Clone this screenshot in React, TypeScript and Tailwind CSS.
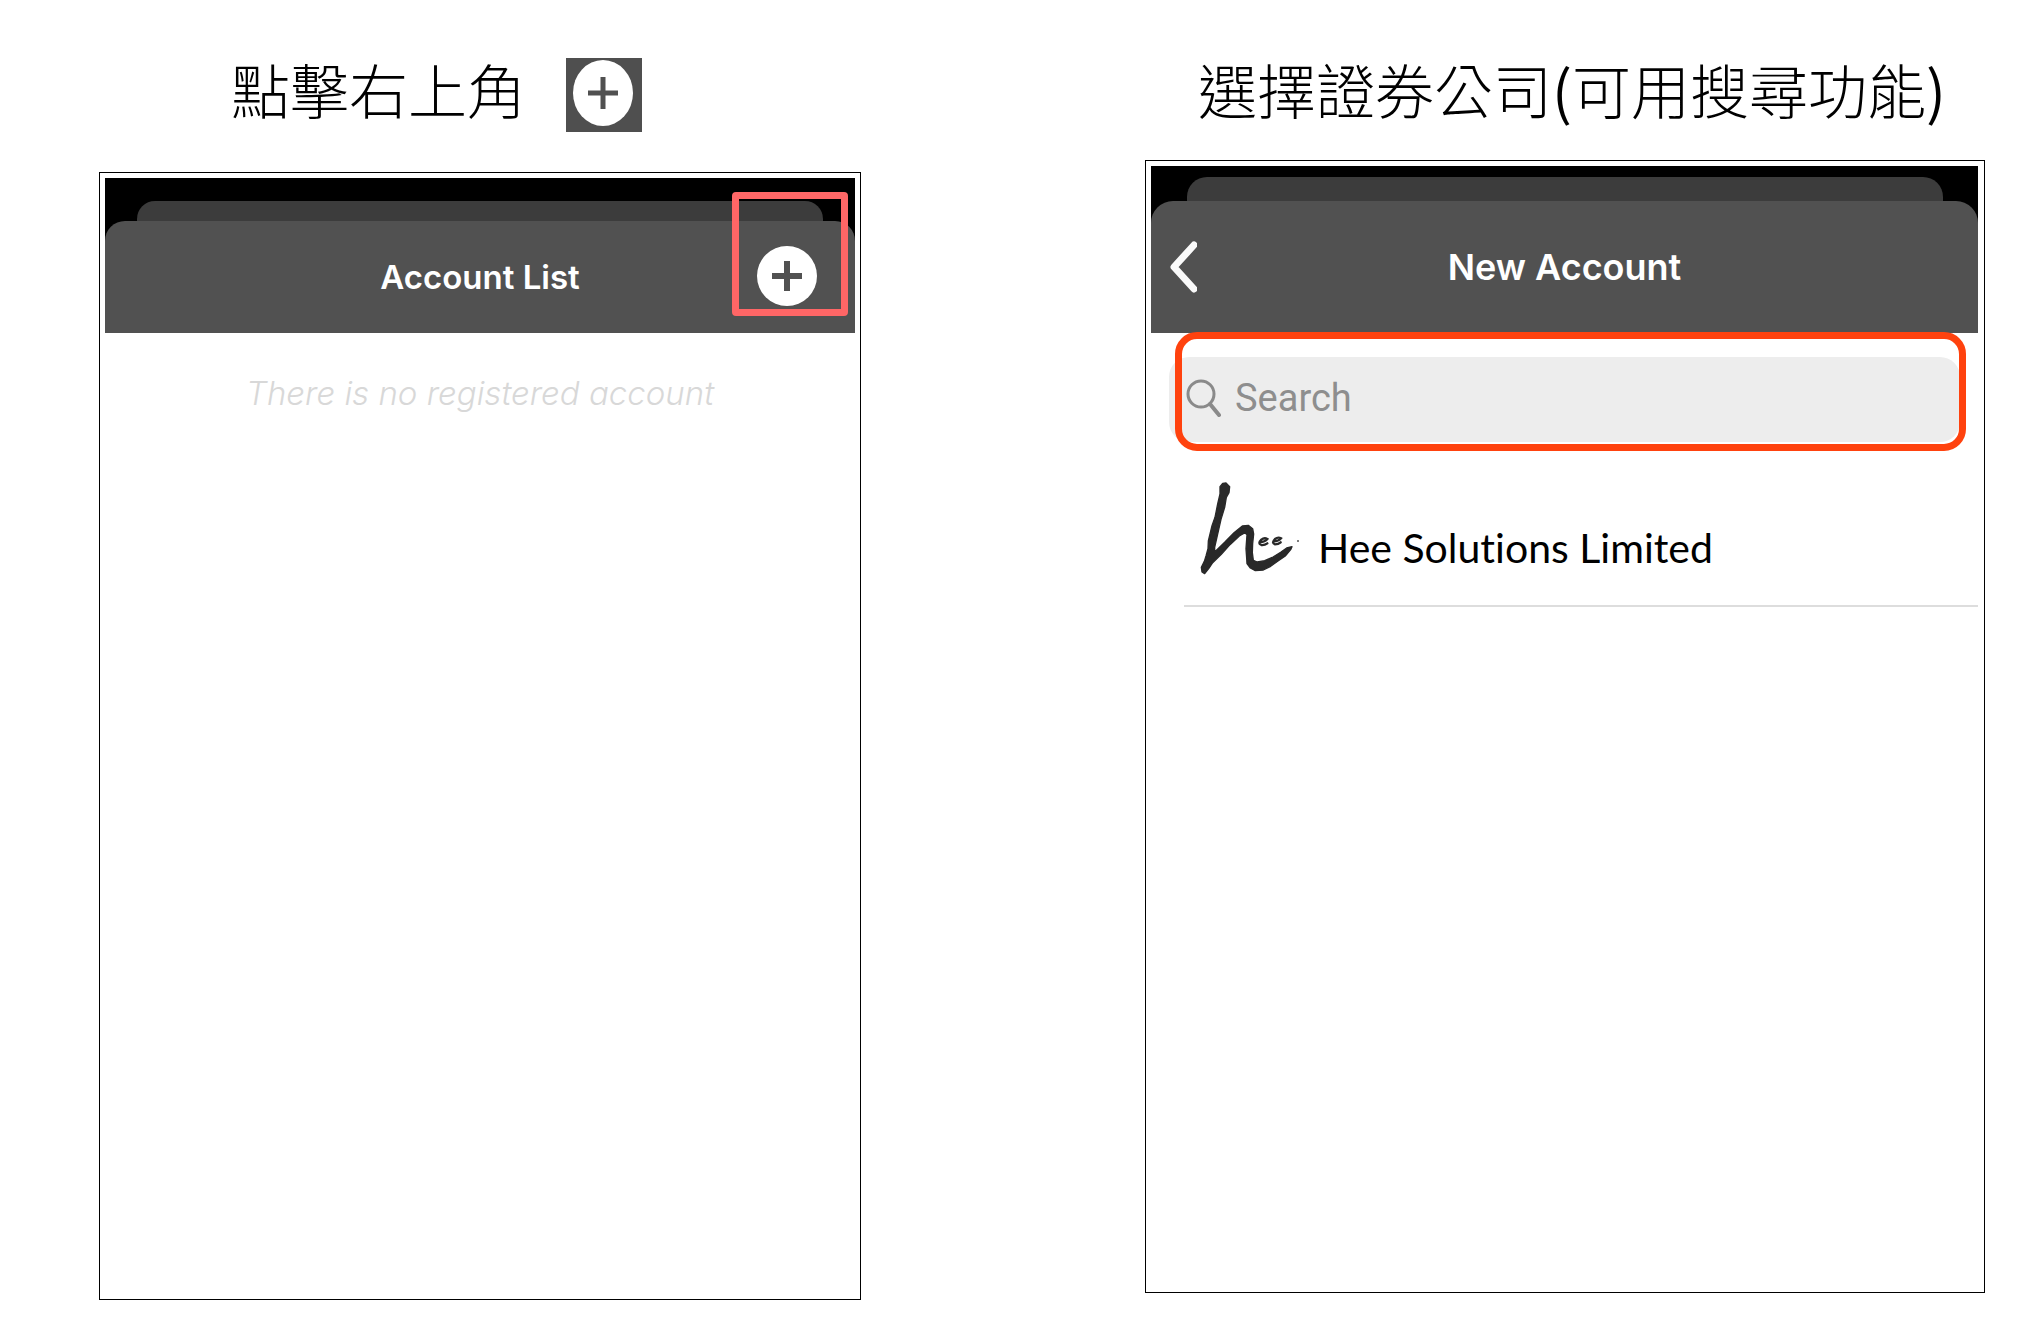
import type { ReactNode } from "react";

type PhoneHeaderProps = {
  children: ReactNode;
};

function PlusIcon({ className }: { className: string }) {
  return (
    <svg aria-hidden="true" className={className} viewBox="0 0 60 60">
      <circle cx="30" cy="30" fill="#ffffff" r="30" />
      <path d="M30 15v30M15 30h30" stroke="#515151" strokeWidth="6" />
    </svg>
  );
}

function PlusTile() {
  return (
    <svg aria-label="+" className="h-[74px] w-[76px] bg-[#4f4f4f]" role="img" viewBox="0 0 76 74">
      <ellipse cx="37" cy="35" fill="#ffffff" rx="30" ry="33" />
      <path d="M37 19v32M22 35h30" stroke="#505050" strokeWidth="5" />
    </svg>
  );
}

function HeeLogo() {
  return (
    <svg aria-label="hee" className="h-24 w-[100px] shrink-0 overflow-visible" role="img" viewBox="0 0 300 288">
      <path
        d="M86 10 L96 9 L107 20 L105 38 L97 52 L92 82 L81 118 L72 158 L62 202 L62 216 L92 187 L120 158 L145 138 L163 136 L176 146 L179 162 L176 190 L175 218 L178 241 L190 246 L212 242 L237 231 L260 217 L278 204 L294 200 L290 209 L275 227 L252 243 L230 259 L208 270 L184 272 L169 264 L159 251 L158 235 L156 206 L159 164 L153 158 L136 168 L108 194 L82 223 L56 248 L44 266 L32 281 L24 276 L22 262 L31 244 L36 228 L42 206 L43 183 L54 137 L63 112 L71 72 L78 42 L78 20 Z"
        fill="#292929"
        stroke="#292929"
        strokeLinejoin="round"
        strokeWidth="4"
      />
      <path
        d="M198 186 Q213 186 220 177 Q211 172 202 179 Q190 191 202 195 Q212 196 220 190 M239 184 Q254 184 261 175 Q252 170 243 177 Q231 189 243 193 Q253 193 260 187"
        fill="none"
        stroke="#292929"
        strokeLinecap="round"
        strokeWidth="7"
      />
      <circle cx="312" cy="183" fill="#555555" r="3" />
    </svg>
  );
}

function LeftHeader({ children }: PhoneHeaderProps) {
  return (
    <div className="bg-black pt-[23px]">
      <div className="mx-8 h-5 rounded-t-[18px] bg-[#3c3c3c]" />
      <div className="relative flex h-28 items-center justify-center rounded-t-[20px] bg-[#515151]">{children}</div>
    </div>
  );
}

function RightHeader({ children }: PhoneHeaderProps) {
  return (
    <div className="bg-black pt-[11px]">
      <div className="mr-[35px] ml-9 h-6 rounded-t-[20px] bg-[#3c3c3c]" />
      <div className="relative flex h-[132px] items-center justify-center rounded-t-[22px] bg-[#515151]">{children}</div>
    </div>
  );
}

function AccountListStep() {
  return (
    <section>
      <div className="flex h-[114px] items-start gap-10 pl-[132px]">
        <h1 className="text-[59px] leading-[62px] font-light whitespace-nowrap">點擊右上角</h1>
        <PlusTile />
      </div>
      <div className="min-h-[1128px] border border-black p-[5px]">
        <LeftHeader>
          <h2 className="font-[Inter] text-[33px] leading-10 font-semibold text-white">Account List</h2>
          <button aria-label="Add account" className="absolute right-[38px] bottom-[27px]" type="button">
            <PlusIcon className="size-[60px]" />
          </button>
          <div className="pointer-events-none absolute right-[7px] bottom-[17px] h-[124px] w-[116px] rounded-[4px] border-[7px] border-[#ff6666]" />
        </LeftHeader>
        <p className="pt-10 text-center font-[Inter] text-[33px] leading-10 font-light text-[#d8d8d8] italic">
          There is no registered account
        </p>
      </div>
    </section>
  );
}

function NewAccountStep() {
  return (
    <section>
      <div className="h-[102px] pl-[53px]">
        <h1 className="text-[59px] leading-[62px] font-light whitespace-nowrap">
          選擇證券公司<span className="font-normal">(</span>可用搜尋功能<span className="font-normal">)</span>
        </h1>
      </div>
      <div className="min-h-[1133px] border border-black py-[5px] pr-1.5 pl-[5px]">
        <RightHeader>
          <button aria-label="Back" className="absolute left-[18px]" type="button">
            <svg aria-hidden="true" className="h-[52px] w-7" fill="none" viewBox="0 0 28 52">
              <path d="M25 4L5 26L25 48" stroke="#fafafa" strokeLinecap="round" strokeLinejoin="round" strokeWidth="7" />
            </svg>
          </button>
          <h2 className="font-[Inter] text-4xl leading-12 font-semibold text-white">New Account</h2>
        </RightHeader>

        <div className="relative pt-6 pr-[18px] pl-[18px]">
          <label className="flex h-[85px] items-center gap-3.5 rounded-[20px] bg-[#ededed] pl-4">
            <svg aria-hidden="true" className="mb-1 h-[38px] w-9 shrink-0" fill="none" viewBox="0 0 36 38">
              <circle cx="16" cy="15" r="13" stroke="#8a8a8a" strokeWidth="3" />
              <path d="M25 25L34 36" stroke="#8a8a8a" strokeLinecap="round" strokeWidth="4" />
            </svg>
            <input
              aria-label="Search"
              className="min-w-0 flex-1 bg-transparent pb-1 font-[Roboto] text-[38px] leading-12 outline-none placeholder:text-[#8e8e8e]"
              placeholder="Search"
              type="text"
            />
          </label>
          <div className="pointer-events-none absolute -top-px right-3 h-[119px] left-6 rounded-[22px] border-[7px] border-[#ff420e]" />
        </div>

        <ul className="pt-[38px] pl-[33px]">
          <li className="flex h-[127px] items-start gap-6 border-b-2 border-[#dddddd] pl-2.5">
            <HeeLogo />
            <span className="pt-10 font-[Lato] text-[41px] leading-14 whitespace-nowrap text-black [font-variant-ligatures:none]">
              Hee Solutions Limited
            </span>
          </li>
        </ul>
      </div>
    </section>
  );
}

export default function App() {
  return (
    <main className="grid min-h-screen grid-cols-[762fr_840fr] gap-x-[284px] bg-white pt-[58px] pr-11 pb-7 pl-[99px] font-['Noto_Sans_CJK_TC',sans-serif] text-black">
      <AccountListStep />
      <NewAccountStep />
    </main>
  );
}
